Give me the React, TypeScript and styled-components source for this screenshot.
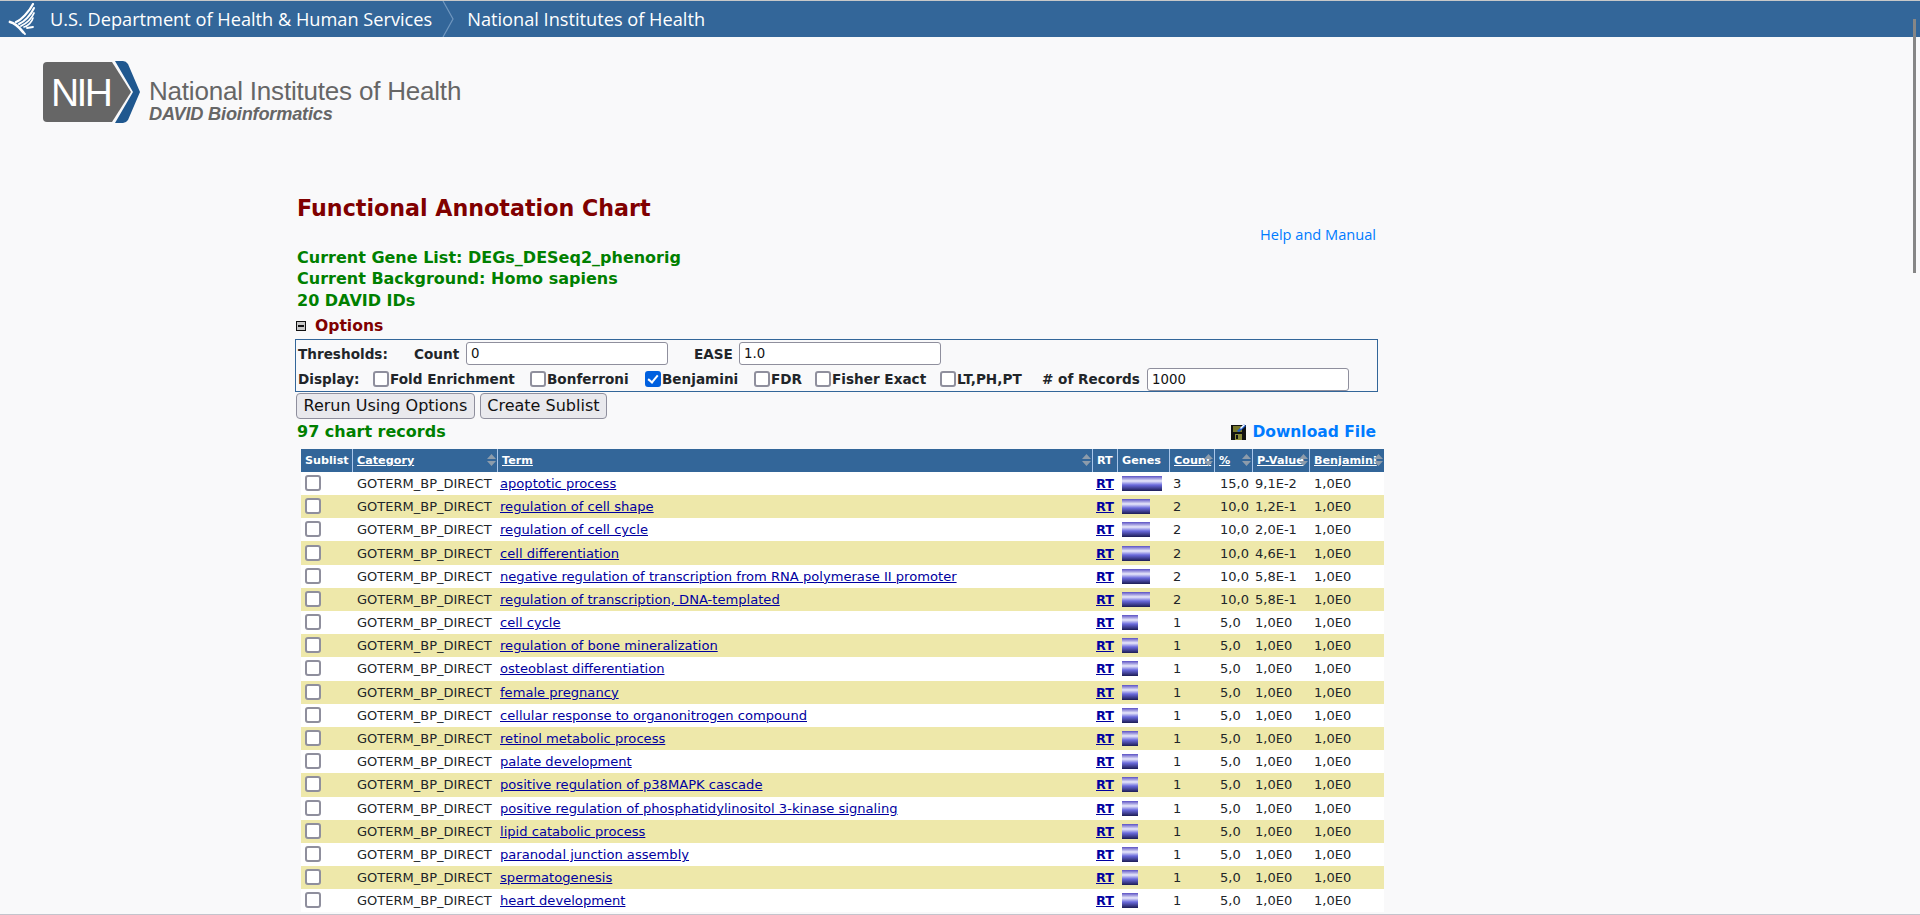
import React from 'react';
import styled, { createGlobalStyle } from 'styled-components';

const GlobalStyle = createGlobalStyle`
  html, body {
    margin: 0;
    height: 915px;
    overflow: hidden;
    background: #f9f9fa;
    font-family: "DejaVu Sans", Verdana, sans-serif;
    color: #212529;
  }
`;

const TopBar = styled.div`
  height: 36px;
  border-top: 1px solid #c8c8c8;
  background: #336699;
  display: flex;
  align-items: center;
  color: #fff;
  font-family: "Open Sans", sans-serif;
  font-size: 18.2px;
`;

const TopLabel = styled.a<{ $left: number }>`
  margin-left: ${p => p.$left}px;
  white-space: nowrap;
`;

const LogoRow = styled.div`
  height: 157px;
  padding: 24px 0 0 43px;
  box-sizing: border-box;
  display: flex;
  align-items: flex-start;
  gap: 8px;
`;

const LogoText = styled.div`
  margin-top: 16px;
  color: #666;
  font-family: "Liberation Sans", Arial, sans-serif;
`;

const LogoName = styled.div`
  font-size: 26px;
  line-height: 28px;
  letter-spacing: -0.2px;
`;

const LogoSub = styled.div`
  font-size: 18.2px;
  line-height: 19px;
  font-style: italic;
  font-weight: bold;
  letter-spacing: -0.2px;
`;

const Main = styled.div`
  margin-left: 295px;
  width: 1089px;
`;

const Title = styled.h1`
  margin: 0 0 0 2px;
  font-size: 22.2px;
  line-height: 28px;
  font-weight: bold;
  color: #800000;
`;

const HelpRow = styled.div`
  display: flex;
  justify-content: flex-end;
  padding: 0 8px 2px 0;
  box-sizing: border-box;
  height: 25px;
  align-items: center;
`;

const HelpLink = styled.a`
  color: #007bff;
  font-family: "Open Sans", sans-serif;
  font-size: 14.6px;
`;

const InfoLine = styled.div`
  margin-left: 2px;
  font-size: 16px;
  line-height: 21.3px;
  font-weight: bold;
  color: #008000;
`;

const OptionsHead = styled.div`
  margin-top: 2px;
  height: 26px;
  display: flex;
  align-items: center;
  gap: 9px;
  padding-left: 1px;
  font-size: 15.6px;
  font-weight: bold;
  color: #800000;
`;

const MinusBox = styled.span`
  width: 8px;
  height: 8px;
  border: 1px solid #111;
  background: #c8c8c8;
  display: flex;
  align-items: center;
  justify-content: center;
  &::after {
    content: "";
    width: 6px;
    height: 2px;
    background: #111;
  }
`;

const OptionsBox = styled.div`
  width: 1083px;
  height: 53px;
  box-sizing: border-box;
  border: 1px solid #336699;
  padding: 1px 0 0 2px;
`;

const OptionLine = styled.div`
  height: 25.5px;
  display: flex;
  align-items: center;
  font-size: 13.6px;
  font-weight: bold;
  white-space: nowrap;
`;

const OptLabel = styled.span<{ $w: number }>`
  width: ${p => p.$w}px;
  flex: none;
`;

const TextBox = styled.input<{ $w: number }>`
  width: ${p => p.$w}px;
  height: 23px;
  box-sizing: border-box;
  flex: none;
  border: 1px solid #8f8f9d;
  border-radius: 3px;
  background: #fff;
  padding: 0 4px;
  margin: 0;
  font-family: "DejaVu Sans", sans-serif;
  font-size: 13.3px;
  color: #111;
`;

const Check = styled.input.attrs({ type: 'checkbox' })`
  appearance: none;
  width: 16px;
  height: 16px;
  box-sizing: border-box;
  flex: none;
  margin: 0 1px 0 0;
  border: 2px solid #8f8f9d;
  border-radius: 3px;
  background: #fff;
  position: relative;
  &:checked {
    background: #0060df;
    border-color: #0060df;
  }
  &:checked::after {
    content: "";
    position: absolute;
    left: 3px;
    top: 0px;
    width: 4px;
    height: 8px;
    border: solid #fff;
    border-width: 0 2px 2px 0;
    transform: rotate(40deg);
  }
`;

const RowCheck = styled(Check)`
  display: block;
  margin: 0 0 1px 0;
`;

const CheckWrap = styled.label<{ $w: number }>`
  width: ${p => p.$w}px;
  flex: none;
  display: flex;
  align-items: center;
`;

const ButtonRow = styled.div`
  margin: 1px 0 0 1px;
  display: flex;
  gap: 5px;
`;

const Button = styled.button`
  height: 26px;
  box-sizing: border-box;
  padding: 0 6.5px;
  border: 1px solid #8f8f9d;
  border-radius: 4px;
  background: #e9e9ed;
  color: #111;
  font-family: "DejaVu Sans", sans-serif;
  font-size: 16px;
`;

const RecordsRow = styled.div`
  height: 26px;
  margin-bottom: 4px;
  display: flex;
  justify-content: space-between;
  align-items: center;
  padding: 0 8px 0 2px;
`;

const Records = styled.span`
  font-size: 16px;
  font-weight: bold;
  color: #008000;
`;

const Download = styled.a`
  display: flex;
  align-items: center;
  gap: 6px;
  font-size: 15.5px;
  font-weight: bold;
  color: #007bff;
`;

const Table = styled.table`
  margin-left: 6px;
  width: 1083px;
  table-layout: fixed;
  border-collapse: separate;
  border-spacing: 0;
  font-size: 13px;
`;

const HeadRow = styled.tr`
  height: 23px;
  background: #336699;
`;

const Th = styled.th<{ $w: number }>`
  width: ${p => p.$w}px;
  box-sizing: border-box;
  padding: 0;
  border-right: 1px solid #a9c6ea;
  color: #fff;
  font-size: 11.2px;
  font-weight: bold;
  text-align: left;
  &:last-child {
    border-right: none;
  }
`;

const ThInner = styled.div`
  position: relative;
  height: 23px;
  line-height: 23px;
  padding-left: 4px;
  overflow: hidden;
  white-space: nowrap;
`;

const HeadLink = styled.a`
  color: #fff;
  text-decoration: underline;
`;

const SortMark = styled.svg`
  position: absolute;
  right: 1px;
  top: 5px;
`;

const Row = styled.tr<{ $odd: boolean }>`
  height: 23.2px;
  background: ${p => (p.$odd ? '#eee8aa' : '#fff')};
`;

const Td = styled.td<{ $pad?: number }>`
  padding: 0 0 0 ${p => p.$pad ?? 4}px;
  white-space: nowrap;
  overflow: hidden;
`;

const TermLink = styled.a`
  color: #0000a0;
  font-size: 13.1px;
  text-decoration: underline;
`;

const RtLink = styled.a`
  color: #0000a0;
  font-size: 12.8px;
  font-weight: bold;
  text-decoration: underline;
`;

const GeneBar = styled.div<{ $count: number }>`
  height: 15px;
  width: ${p => 4 + p.$count * 12}px;
  background: linear-gradient(
    #5a50c4 0%,
    #e9e9fb 33%,
    #6a6adc 60%,
    #1c1c55 100%
  );
`;

const ScrollThumb = styled.div`
  position: fixed;
  left: 1913px;
  top: 19px;
  width: 3px;
  height: 254px;
  background: #868686;
`;

const BottomLine = styled.div`
  position: fixed;
  left: 0;
  top: 914px;
  width: 100%;
  height: 1px;
  background: #c4c4cc;
`;

const rows: [string, number, string, string][] = [
  ['apoptotic process', 3, '15,0', '9,1E-2'],
  ['regulation of cell shape', 2, '10,0', '1,2E-1'],
  ['regulation of cell cycle', 2, '10,0', '2,0E-1'],
  ['cell differentiation', 2, '10,0', '4,6E-1'],
  ['negative regulation of transcription from RNA polymerase II promoter', 2, '10,0', '5,8E-1'],
  ['regulation of transcription, DNA-templated', 2, '10,0', '5,8E-1'],
  ['cell cycle', 1, '5,0', '1,0E0'],
  ['regulation of bone mineralization', 1, '5,0', '1,0E0'],
  ['osteoblast differentiation', 1, '5,0', '1,0E0'],
  ['female pregnancy', 1, '5,0', '1,0E0'],
  ['cellular response to organonitrogen compound', 1, '5,0', '1,0E0'],
  ['retinol metabolic process', 1, '5,0', '1,0E0'],
  ['palate development', 1, '5,0', '1,0E0'],
  ['positive regulation of p38MAPK cascade', 1, '5,0', '1,0E0'],
  ['positive regulation of phosphatidylinositol 3-kinase signaling', 1, '5,0', '1,0E0'],
  ['lipid catabolic process', 1, '5,0', '1,0E0'],
  ['paranodal junction assembly', 1, '5,0', '1,0E0'],
  ['spermatogenesis', 1, '5,0', '1,0E0'],
  ['heart development', 1, '5,0', '1,0E0'],
];

const SortIcon = () => (
  <SortMark width="9" height="12" viewBox="0 0 9 12">
    <path d="M4.5 0 L9 5 H0 Z M0 7 H9 L4.5 12 Z" fill="#8d9cab" />
  </SortMark>
);

const Eagle = () => (
  <svg width="30" height="33" viewBox="0 0 30 33" style={{ marginLeft: 8, flex: 'none' }}>
    <g fill="none" stroke="#fff" strokeLinecap="round">
      <path d="M8 19 C13 17 21 9 25 1" strokeWidth="2.2" />
      <path d="M11 21 C16 19 23 12 26 5" strokeWidth="2" />
      <path d="M13 23 C19 20 24 15 26 10" strokeWidth="1.8" />
      <path d="M16 24 C20 23 24 19 25 15" strokeWidth="1.6" />
      <path d="M2 19 C7 20 11 24 15 29" strokeWidth="2.8" />
      <path d="M15 29 L17 31 M19 25 L25 24" strokeWidth="1.8" />
    </g>
  </svg>
);

const Separator = () => (
  <svg width="12" height="36" viewBox="0 0 12 36" style={{ marginLeft: 10, flex: 'none' }}>
    <path d="M1 0 L11 18 L1 36" fill="none" stroke="#7097bf" strokeWidth="1.2" />
  </svg>
);

const NihLogo = () => (
  <svg width="98" height="62" viewBox="0 0 98 62" style={{ flex: 'none' }}>
    <path d="M4 1 H69 L88 31 L69 61 H4 Q0 61 0 57 V5 Q0 1 4 1 Z" fill="#666" />
    <path d="M72 0 H80 Q83 0 85 3 L97 31 L85 59 Q83 62 80 62 H72 L90 31 Z" fill="#20588f" />
    <text x="8" y="45" fontFamily="Liberation Sans, Arial, sans-serif" fontSize="39" fill="#fff" textLength="62">NIH</text>
  </svg>
);

const SaveIcon = () => (
  <svg width="15" height="16" viewBox="0 0 15 16" style={{ flex: 'none' }}>
    <rect x="0" y="1" width="15" height="15" fill="#111" />
    <rect x="2" y="2" width="9" height="6" fill="#77772a" />
    <rect x="4" y="10" width="7" height="6" fill="#8a8a3a" />
    <rect x="5" y="11" width="2" height="4" fill="#111" />
    <path d="M6 7 L13 0 L15 2 L8 8 Z" fill="#1f5fd0" />
    <path d="M9 4 L13 0 L14 1 L10 5 Z" fill="#fff" />
  </svg>
);

const App: React.FC = () => {
  return (
    <>
      <GlobalStyle />
      <TopBar>
        <Eagle />
        <TopLabel $left={12}>U.S. Department of Health &amp; Human Services</TopLabel>
        <Separator />
        <TopLabel $left={13}>National Institutes of Health</TopLabel>
      </TopBar>
      <LogoRow>
        <NihLogo />
        <LogoText>
          <LogoName>National Institutes of Health</LogoName>
          <LogoSub>DAVID Bioinformatics</LogoSub>
        </LogoText>
      </LogoRow>
      <Main>
        <Title>Functional Annotation Chart</Title>
        <HelpRow>
          <HelpLink>Help and Manual</HelpLink>
        </HelpRow>
        <InfoLine>Current Gene List: DEGs_DESeq2_phenorig</InfoLine>
        <InfoLine>Current Background: Homo sapiens</InfoLine>
        <InfoLine>20 DAVID IDs</InfoLine>
        <OptionsHead>
          <MinusBox />
          Options
        </OptionsHead>
        <OptionsBox>
          <OptionLine>
            <OptLabel $w={116}>Thresholds:</OptLabel>
            <OptLabel $w={52}>Count</OptLabel>
            <TextBox $w={202} defaultValue="0" />
            <OptLabel $w={26} />
            <OptLabel $w={45}>EASE</OptLabel>
            <TextBox $w={202} defaultValue="1.0" />
          </OptionLine>
          <OptionLine>
            <OptLabel $w={75}>Display:</OptLabel>
            <CheckWrap $w={157}><Check />Fold Enrichment</CheckWrap>
            <CheckWrap $w={115}><Check />Bonferroni</CheckWrap>
            <CheckWrap $w={109}><Check defaultChecked />Benjamini</CheckWrap>
            <CheckWrap $w={61}><Check />FDR</CheckWrap>
            <CheckWrap $w={125}><Check />Fisher Exact</CheckWrap>
            <CheckWrap $w={102}><Check />LT,PH,PT</CheckWrap>
            <OptLabel $w={105}># of Records</OptLabel>
            <TextBox $w={202} defaultValue="1000" />
          </OptionLine>
        </OptionsBox>
        <ButtonRow>
          <Button>Rerun Using Options</Button>
          <Button>Create Sublist</Button>
        </ButtonRow>
        <RecordsRow>
          <Records>97 chart records</Records>
          <Download>
            <SaveIcon />
            Download File
          </Download>
        </RecordsRow>
        <Table>
          <thead>
            <HeadRow>
              <Th $w={52}><ThInner>Sublist</ThInner></Th>
              <Th $w={145}><ThInner><HeadLink>Category</HeadLink><SortIcon /></ThInner></Th>
              <Th $w={595}><ThInner><HeadLink>Term</HeadLink><SortIcon /></ThInner></Th>
              <Th $w={25}><ThInner>RT</ThInner></Th>
              <Th $w={52}><ThInner>Genes</ThInner></Th>
              <Th $w={45}><ThInner><HeadLink>Count</HeadLink><SortIcon /></ThInner></Th>
              <Th $w={38}><ThInner><HeadLink>%</HeadLink><SortIcon /></ThInner></Th>
              <Th $w={57}><ThInner><HeadLink>P-Value</HeadLink><SortIcon /></ThInner></Th>
              <Th $w={74}><ThInner><HeadLink>Benjamini</HeadLink><SortIcon /></ThInner></Th>
            </HeadRow>
          </thead>
          <tbody>
            {rows.map(([term, count, pct, pval], i) => (
              <Row key={term} $odd={i % 2 === 1}>
                <Td><RowCheck /></Td>
                <Td>GOTERM_BP_DIRECT</Td>
                <Td $pad={2}><TermLink>{term}</TermLink></Td>
                <Td $pad={3}><RtLink>RT</RtLink></Td>
                <Td><GeneBar $count={count} /></Td>
                <Td $pad={3}>{count}</Td>
                <Td $pad={5}>{pct}</Td>
                <Td $pad={2}>{pval}</Td>
                <Td>1,0E0</Td>
              </Row>
            ))}
          </tbody>
        </Table>
      </Main>
      <ScrollThumb />
      <BottomLine />
    </>
  );
};

export default App;
